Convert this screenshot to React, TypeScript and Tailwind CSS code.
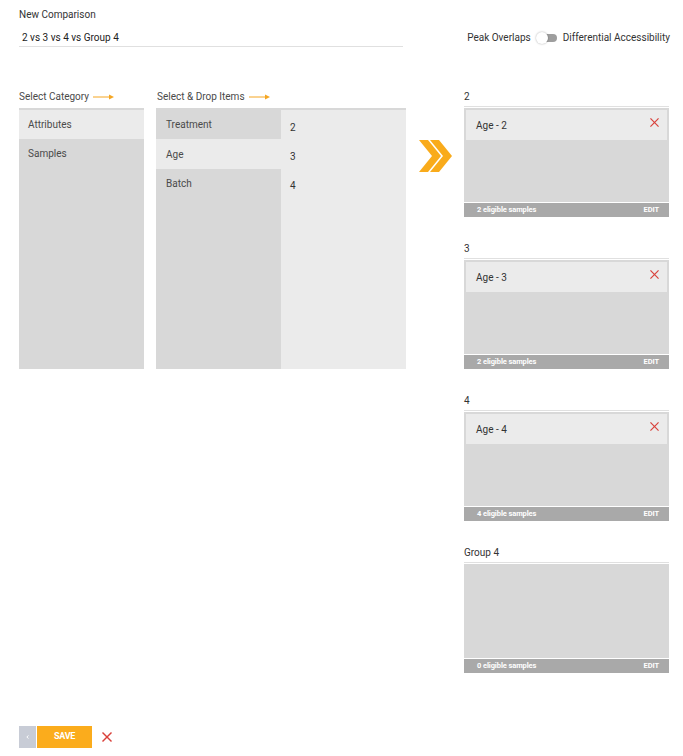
import React from 'react';

const font = { fontFamily: 'Roboto, "Liberation Sans", sans-serif' };

function ArrowRight() {
  return (
    <svg width="21" height="6" viewBox="0 0 21 6" className="ml-[4px]">
      <line x1="0" y1="3" x2="17" y2="3" stroke="#f5a623" strokeWidth="1" />
      <polygon points="16,0.5 21,3 16,5.5" fill="#f5a623" />
    </svg>
  );
}

function CloseX({ size = 9, stroke = 1.3 }: { size?: number; stroke?: number }) {
  return (
    <svg width={size} height={size} viewBox="0 0 10 10">
      <line x1="0.5" y1="0.5" x2="9.5" y2="9.5" stroke="#d9403a" strokeWidth={stroke} />
      <line x1="9.5" y1="0.5" x2="0.5" y2="9.5" stroke="#d9403a" strokeWidth={stroke} />
    </svg>
  );
}

type Group = { label: string; item?: string; count: number };

const groups: Group[] = [
  { label: '2', item: 'Age - 2', count: 2 },
  { label: '3', item: 'Age - 3', count: 2 },
  { label: '4', item: 'Age - 4', count: 4 },
  { label: 'Group 4', count: 0 },
];

function GroupCard({ group }: { group: Group }) {
  return (
    <div>
      <div className="h-[12px] text-[10px] leading-[12px] text-[#333]">{group.label}</div>
      <div className="mt-[3px] border-t border-[#e0e0e0]" />
      <div className="mt-[1px] h-[94px] bg-[#d8d8d8] px-[2px] pt-[2px]">
        {group.item && (
          <div className="flex h-[30px] items-center justify-between bg-[#ebebeb] pl-[10px] pr-[8px]">
            <span className="text-[10px] text-[#333]">{group.item}</span>
            <span className="-mt-[6px]">
              <CloseX />
            </span>
          </div>
        )}
      </div>
      <div className="h-[1px] bg-white" />
      <div className="flex h-[14px] items-center justify-between bg-[#a9a9a9] pl-[13px] pr-[10px] text-[7.5px] font-bold tracking-[-0.1px] text-white">
        <span>{group.count} eligible samples</span>
        <span>EDIT</span>
      </div>
    </div>
  );
}

export default function App() {
  const categories = ['Attributes', 'Samples'];
  const items = ['Treatment', 'Age', 'Batch'];
  const values = ['2', '3', '4'];

  return (
    <div className="min-h-[756px] bg-white pl-[19px] pt-[9px] text-[#333]" style={font}>
      {/* header */}
      <div className="flex items-end">
        <div className="w-[384px]">
          <div className="text-[10px] leading-[12px] text-[#333]">New Comparison</div>
          <div className="mt-[7px] flex h-[19px] items-center border-b border-[#e0e0e0] pl-[3px] text-[10px] text-[#222]">
            2 vs 3 vs 4 vs Group 4
          </div>
        </div>
        <div className="ml-auto mr-[13px] flex h-[19px] items-center text-[10px] text-[#333]">
          <span>Peak Overlaps</span>
          <div className="relative ml-[5px] mr-[6px] h-[12px] w-[21px]">
            <div className="absolute left-[4px] top-[2px] h-[8px] w-[17px] rounded-full bg-[#9e9e9e]" />
            <div className="absolute left-0 top-0 h-[12px] w-[12px] rounded-full bg-white shadow-[0_0_2px_rgba(0,0,0,0.35)]" />
          </div>
          <span>Differential Accessibility</span>
        </div>
      </div>

      {/* body */}
      <div className="mt-[44px] flex">
        <div className="flex w-[387px] gap-[12px]">
          <div className="w-[125px]">
            <div className="flex h-[12px] items-center text-[10px] leading-[12px] text-[#4a4a4a]">
              Select Category
              <ArrowRight />
            </div>
            <div className="mt-[5px] h-[261px] bg-[#d8d8d8] pt-[2px]">
              {categories.map((c, i) => (
                <div
                  key={c}
                  className={
                    'flex h-[29px] items-center pl-[9px] text-[10px] text-[#4a4a4a] ' +
                    (i === 0 ? 'bg-[#ebebeb]' : '')
                  }
                >
                  {c}
                </div>
              ))}
            </div>
          </div>
          <div className="w-[250px]">
            <div className="flex h-[12px] items-center pl-[1px] text-[10px] leading-[12px] text-[#4a4a4a]">
              Select &amp; Drop Items
              <ArrowRight />
            </div>
            <div className="mt-[5px] flex h-[261px] bg-[#d8d8d8] pt-[2px]">
              <div className="w-[125px]">
                {items.map((c, i) => (
                  <div
                    key={c}
                    className={
                      'flex h-[29px] items-center pl-[10px] text-[10px] text-[#4a4a4a] ' +
                      (i === 1 ? 'h-[30px] bg-[#ebebeb]' : '')
                    }
                  >
                    {c}
                  </div>
                ))}
              </div>
              <div className="w-[125px] bg-[#ebebeb] pt-[3px]">
                {values.map((v) => (
                  <div key={v} className="flex h-[29px] items-center pl-[9px] text-[10px] text-[#333]">
                    {v}
                  </div>
                ))}
              </div>
            </div>
          </div>
        </div>

        <div className="w-[58px] pl-[13px] pt-[49px]">
          <svg width="34" height="32" viewBox="0 0 34 32">
            <polygon points="0,0 9,0 22,16 9,32 0,32 13,16" fill="#f9ab1b" />
            <polygon points="11,0 20,0 33,16 20,32 11,32 24,16" fill="#f9ab1b" />
          </svg>
        </div>

        <div className="flex w-[205px] flex-col gap-[26px]">
          {groups.map((g) => (
            <GroupCard key={g.label} group={g} />
          ))}
        </div>
      </div>

      {/* footer actions */}
      <div className="mt-[53px] flex items-center pb-[8px]">
        <div className="flex h-[22px] w-[17px] items-center justify-center bg-[#c8ccd6]">
          <svg width="3" height="4" viewBox="0 0 3 4">
            <polyline points="2.5,0.5 0.8,2 2.5,3.5" fill="none" stroke="#ffffff" strokeWidth="0.9" />
          </svg>
        </div>
        <div className="ml-[1px] flex h-[22px] w-[55px] items-center justify-center bg-[#fbac1c] text-[9px] font-bold tracking-[-0.3px] text-white">
          SAVE
        </div>
        <div className="ml-[10px] flex items-center">
          <CloseX size={10} stroke={1.4} />
        </div>
      </div>
    </div>
  );
}
